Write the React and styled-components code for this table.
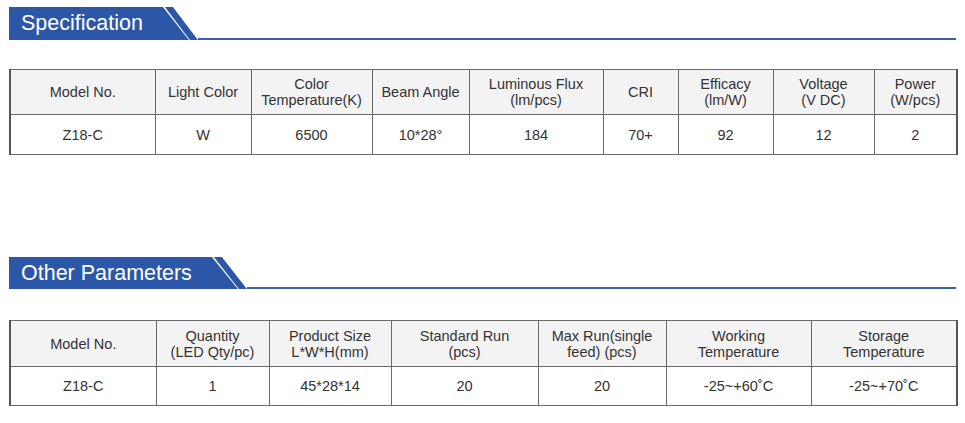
import React from 'react'
import styled, { createGlobalStyle } from 'styled-components'

const GlobalStyle = createGlobalStyle`
  body {
    margin: 0;
    background: #fff;
    font-family: "Liberation Sans", Arial, sans-serif;
  }
`

const Page = styled.div`
  width: 965px;
  padding: 7px 0 0 9px;
  box-sizing: border-box;
  font-family: "Liberation Sans", Arial, sans-serif;
`

const Section = styled.section`
  margin-top: ${props => props.gap || 0}px;
`

const Heading = styled.div`
  display: flex;
  align-items: flex-end;
  width: 947px;
  height: ${props => props.h}px;
`

const Title = styled.h2`
  margin: 0;
  height: 100%;
  display: flex;
  align-items: center;
  padding: 0 46px 0 12px;
  background: #2c57a8;
  color: #fff;
  font-weight: normal;
  font-size: 21.5px;
  clip-path: polygon(0 0, calc(100% - 26px) 0, 100% 100%, 0 100%);
`

const Stripe = styled.span`
  flex: none;
  width: 33px;
  height: 100%;
  margin-left: -24px;
  background: #2c57a8;
  clip-path: polygon(0 0, 8px 0, 100% 100%, calc(100% - 8px) 100%);
`

const Rule = styled.span`
  flex: 1;
  height: 2px;
  background: #3b5ea8;
`

const Table = styled.table`
  margin-top: ${props => props.gap}px;
  width: 947px;
  table-layout: fixed;
  border-collapse: collapse;
  font-family: "Liberation Sans", Arial, sans-serif;
  color: #333;
  font-size: 14.5px;
  line-height: 16px;
  text-align: center;
  border-left: 2px solid #555;
  border-right: 2px solid #555;

  th, td {
    border: 1px solid #6a6a6a;
    padding: 0 2px;
    font-weight: normal;
    white-space: pre-line;
  }

  th {
    background: #f3f3f3;
    height: ${props => props.headH}px;
  }

  td {
    height: ${props => props.bodyH}px;
  }
`

const SpecTable = ({ cols, head, row, gap, headH, bodyH }) =>
  <Table gap={gap} headH={headH} bodyH={bodyH}>
    <colgroup>
      {cols.map((w, i) => <col key={i} style={{ width: w }} />)}
    </colgroup>
    <thead>
      <tr>{head.map((h, i) => <th key={i}>{h}</th>)}</tr>
    </thead>
    <tbody>
      <tr>{row.map((c, i) => <td key={i}>{c}</td>)}</tr>
    </tbody>
  </Table>

const specCols = [145, 96, 121, 97, 134, 75, 95, 101, 83]
const specHead = [
  'Model No.',
  'Light Color',
  'Color\nTemperature(K)',
  'Beam Angle',
  'Luminous Flux\n(lm/pcs)',
  'CRI',
  'Efficacy\n(lm/W)',
  'Voltage\n(V DC)',
  'Power\n(W/pcs)'
]
const specRow = ['Z18-C', 'W', '6500', '10*28°', '184', '70+', '92', '12', '2']

const otherCols = [146, 113, 122, 147, 128, 145, 146]
const otherHead = [
  'Model No.',
  'Quantity\n(LED Qty/pc)',
  'Product Size\nL*W*H(mm)',
  'Standard Run\n(pcs)',
  'Max Run(single\nfeed) (pcs)',
  'Working\nTemperature',
  'Storage\nTemperature'
]
const otherRow = ['Z18-C', '1', '45*28*14', '20', '20', '-25~+60˚C', '-25~+70˚C']

const SectionHeading = ({ title, h }) =>
  <Heading h={h}>
    <Title>{title}</Title>
    <Stripe />
    <Rule />
  </Heading>

const App = () =>
  <Page>
    <GlobalStyle />
    <Section>
      <SectionHeading title="Specification" h={33} />
      <SpecTable cols={specCols} head={specHead} row={specRow} gap={29} headH={44} bodyH={39} />
    </Section>
    <Section gap={102}>
      <SectionHeading title="Other Parameters" h={32} />
      <SpecTable cols={otherCols} head={otherHead} row={otherRow} gap={31} headH={45} bodyH={38} />
    </Section>
  </Page>

export default App
